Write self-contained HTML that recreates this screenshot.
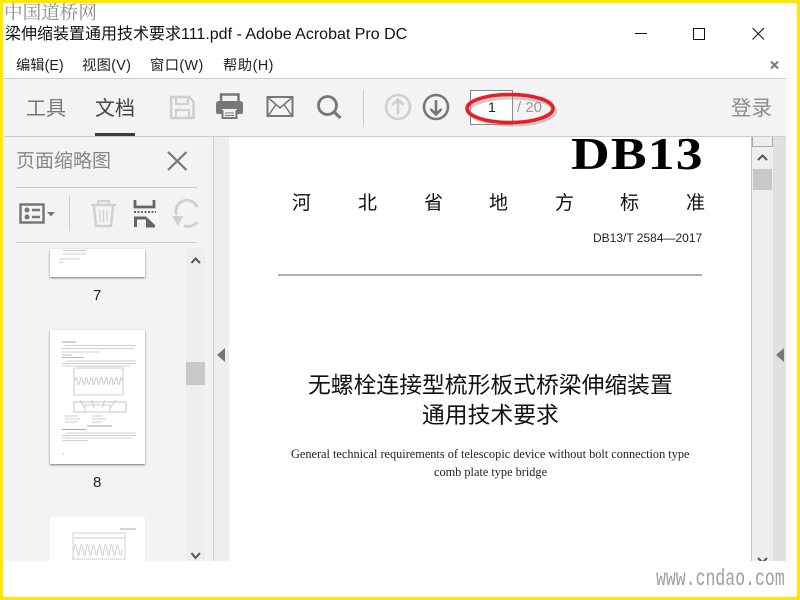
<!DOCTYPE html>
<html><head><meta charset="utf-8">
<style>
html,body{margin:0;padding:0;background:#fff}
body{width:800px;height:600px;position:relative;overflow:hidden;font-family:"Liberation Sans","Noto Sans CJK SC",sans-serif}
.a{position:absolute}
.t{position:absolute;white-space:nowrap;line-height:1}
svg{position:absolute;overflow:visible}
</style></head><body>

<!-- app regions -->
<div class="a" style="left:4px;top:78px;width:782px;height:59px;background:#f3f3f3;border-top:1px solid #ccc;border-bottom:1px solid #ccc;box-sizing:border-box"></div>
<div class="a" style="left:4px;top:137px;width:209px;height:424px;background:#f3f3f3"></div>
<div class="a" style="left:213px;top:137px;width:1px;height:424px;background:#ccc"></div>
<div class="a" style="left:214px;top:137px;width:15px;height:424px;background:#eeeeee"></div>
<div class="a" style="left:229px;top:137px;width:522px;height:424px;background:#fff"></div>
<div class="a" style="left:751px;top:137px;width:1px;height:424px;background:#c4c4c4"></div>
<div class="a" style="left:752px;top:137px;width:21px;height:424px;background:#eeeeee"></div>
<div class="a" style="left:773px;top:137px;width:13px;height:424px;background:#e0e0e0"></div>

<!-- watermark -->
<div class="t" style="left:4px;top:3px;font:18.600px/1 'Noto Serif CJK SC','Liberation Serif',serif;color:#8c8c8c">中国道桥网</div>
<div class="t" style="left:656px;top:569px;font:20px/1 'Liberation Mono',monospace;color:#a0a0a0;transform-origin:left top;transform:scale(.825,1.150)">www.cndao.com</div>

<!-- title -->
<div class="t" style="left:5px;top:27px;font-size:16px;color:#111">梁伸缩装置通用技术要求111.pdf - Adobe Acrobat Pro DC</div>
<svg style="left:0;top:0" width="800" height="100">
<path d="M635 33.500H647" stroke="#111" stroke-width="1"/>
<rect x="693.500" y="28.500" width="11" height="11" fill="none" stroke="#111"/>
<path d="M752.500 28L764 39.500M764 28L752.500 39.500" stroke="#111" stroke-width="1"/>
<path d="M771 61.500L778 68.500M778 61.500L771 68.500" stroke="#777" stroke-width="2"/>
</svg>

<!-- menu -->
<div class="t" style="left:16px;top:59px;font-size:14.300px;color:#222">编辑(E)</div>
<div class="t" style="left:82px;top:59px;font-size:14.300px;letter-spacing:.3px;color:#222">视图(V)</div>
<div class="t" style="left:150px;top:59px;font-size:14.300px;letter-spacing:.4px;color:#222">窗口(W)</div>
<div class="t" style="left:223px;top:59px;font-size:14.300px;letter-spacing:.5px;color:#222">帮助(H)</div>

<!-- toolbar -->
<div class="t" style="left:26px;top:99px;font-size:20px;color:#777">工具</div>
<div class="t" style="left:95px;top:99px;font-size:20px;color:#444">文档</div>
<div class="a" style="left:95px;top:133px;width:40px;height:3px;background:#3c3c3c"></div>
<div class="t" style="left:731px;top:99px;font-size:20.500px;color:#8a8a8a">登录</div>

<svg style="left:0;top:0" width="800" height="140" fill="none">
<!-- save -->
<path d="M171 97H189L193.500 101.500V118H171Z" stroke="#cfcfcf" stroke-width="2.500"/>
<path d="M176 97V104H188V97M176 118V110H189V118" stroke="#cfcfcf" stroke-width="2"/>
<!-- print -->
<path d="M221 102V94.500H238.500V102" stroke="#777" stroke-width="2.500"/>
<path d="M216 104Q216 101 219 101H240Q243 101 243 104V112Q243 114 241 114H237V109H222V114H218Q216 114 216 112Z" fill="#777"/>
<path d="M222.500 110V118H236.500V110" stroke="#777" stroke-width="2"/>
<path d="M225 113H234M225 115.500H234" stroke="#777"/>
<!-- mail -->
<rect x="267.500" y="97" width="25" height="19" stroke="#777" stroke-width="2"/>
<path d="M268 97.500L280 108L292 97.500M268 116L276 104.500M292 116L284 104.500" stroke="#777" stroke-width="1.500"/>
<!-- search -->
<circle cx="327.500" cy="105.500" r="9" stroke="#777" stroke-width="2.800"/>
<path d="M334 112L340.500 118" stroke="#777" stroke-width="3.200"/>
<path d="M363.500 90V125" stroke="#ccc"/>
<!-- up -->
<circle cx="398" cy="107" r="12" stroke="#cfcfcf" stroke-width="2.600"/>
<path d="M398 114V100M392.500 105L398 99.500L403.500 105" stroke="#cfcfcf" stroke-width="2.600"/>
<!-- down -->
<circle cx="436" cy="107" r="12" stroke="#777" stroke-width="2.600"/>
<path d="M436 100V114M430.500 109L436 114.500L441.500 109" stroke="#777" stroke-width="2.600"/>
</svg>

<!-- page box -->
<div class="a" style="left:470px;top:90px;width:43px;height:35px;background:#fff;border:1px solid #888;box-sizing:border-box"></div>
<div class="t" style="left:488px;top:100px;font-size:14px;color:#222">1</div>
<div class="t" style="left:517px;top:100px;font-size:15px;color:#999">/ 20</div>
<svg style="left:0;top:0" width="800" height="140" fill="none">
<ellipse cx="512" cy="111" rx="43" ry="13.500" stroke="#999" stroke-width="4" opacity=".5"/>
<ellipse cx="510" cy="108.500" rx="43" ry="14" stroke="#ec1c24" stroke-width="3.500"/>
</svg>

<!-- left panel -->
<div class="t" style="left:16px;top:152px;font-size:19px;color:#888">页面缩略图</div>
<div class="a" style="left:16px;top:187px;width:181px;height:1px;background:#ccc"></div>
<div class="a" style="left:16px;top:242px;width:181px;height:1px;background:#ccc"></div>
<svg style="left:0;top:0" width="230" height="250" fill="none">
<path d="M168 152L186.500 170M186.500 152L168 170" stroke="#777" stroke-width="2.200"/>
<rect x="20.500" y="204.500" width="23" height="18" stroke="#777" stroke-width="2.500"/>
<circle cx="27" cy="210" r="2.500" fill="#777"/><circle cx="27" cy="217" r="2.500" fill="#777"/>
<path d="M32 210H40M32 217H40" stroke="#777" stroke-width="2.500"/>
<path d="M47 212H55L51 216.500Z" fill="#777"/>
<path d="M69.500 196V231" stroke="#ccc"/>
<path d="M91 205H116M98 205V201H109V205" stroke="#d0d0d0" stroke-width="2.200"/>
<path d="M94 206L96 226H111L113 206" stroke="#d0d0d0" stroke-width="2.500"/>
<path d="M100 210V222M103.500 210V222M107 210V222" stroke="#d0d0d0" stroke-width="1.200"/>
<path d="M135 200V207H154V200" stroke="#666" stroke-width="2.800"/>
<path d="M134 212H156" stroke="#666" stroke-width="2" stroke-dasharray="2 1.500"/>
<path d="M135.500 227V218H146" stroke="#666" stroke-width="3"/>
<path d="M146 216.500L155 225V227.500H146Z" fill="#666"/>
<path d="M197 207A10.500 10.500 0 0 0 176.800 215" stroke="#d0d0d0" stroke-width="2.800"/>
<path d="M197 222A10.500 10.500 0 0 1 184 225.500" stroke="#d0d0d0" stroke-width="2.800"/>
<path d="M172 216H183L178 226Z" fill="#d0d0d0"/>
</svg>
<!-- keep undo icon clipped -->
<div class="a" style="left:198px;top:198px;width:10px;height:32px;background:#f3f3f3"></div>

<!-- thumbnail scrollbar -->
<div class="a" style="left:186px;top:249px;width:19px;height:312px;background:#eeeeee"></div>
<div class="a" style="left:186px;top:362px;width:19px;height:23px;background:#c8c8c8"></div>

<!-- thumb 7 -->
<div class="a" style="left:50px;top:249px;width:95px;height:28px;background:#fff;box-shadow:0 1px 2px #777"></div>
<svg style="left:50px;top:249px" width="95" height="28">
<path d="M13 1.500H36M13 5H36M9 10H30M9 13.500H13" stroke="#ccc"/>
</svg>
<div class="t" style="left:93px;top:288px;font-size:15px;color:#222">7</div>

<!-- thumb 8 -->
<div class="a" style="left:50px;top:330px;width:95px;height:134px;background:#fff;box-shadow:0 1px 2px #777"></div>
<svg style="left:50px;top:330px" width="95" height="134" fill="none" stroke="#d4d4d4">
<path d="M12 12H26" stroke="#aaa"/>
<path d="M15 15.500H86M12 18.500H84M12 22H50" stroke="#d0d0d0"/>
<path d="M12 25H22M12 27.500H34" stroke="#bbb"/>
<path d="M15 31H86M12 33.500H86M12 36H80" stroke="#d0d0d0"/>
<path d="M24 38H73V65H24Z" stroke="#ccc"/>
<path d="M25 51q1.250-7 2.500 0t2.500 0t2.500 0t2.500 0t2.500 0t2.500 0t2.500 0t2.500 0t2.500 0t2.500 0t2.500 0t2.500 0t2.500 0t2.500 0t2.500 0t2.500 0t2.500 0t2.500 0t2.500 0" stroke="#c8c8c8"/>
<path d="M24 72H76V82H24Z" stroke="#c4c4c4"/>
<path d="M30 70L35 78M42 70L44 78M55 70L52 78M66 70L60 78M35 75H60V82H35Z" stroke="#ccc"/>
<path d="M15 86H28M15 89H30M15 92H27M42 86H52M42 89H56M42 92H52" stroke="#ccc"/>
<path d="M37 96H62M12 99.500H36" stroke="#aaa"/>
<path d="M15 103H86M12 105.500H86M12 108H82M12 110.500H38" stroke="#d0d0d0"/>
<path d="M13 124H14" stroke="#aaa"/>
</svg>
<div class="t" style="left:93px;top:475px;font-size:15px;color:#222">8</div>

<!-- thumb 9 -->
<div class="a" style="left:50px;top:517px;width:95px;height:44px;background:#fff"></div>
<svg style="left:50px;top:517px" width="95" height="44" fill="none" stroke="#d0d0d0">
<path d="M70 12H86" stroke="#aaa"/>
<path d="M23 16V43M75 16V43M23 16H75M23 21H75M23 42H75"/>
<path d="M24 33q1.500-11 3 0t3 0t3 0t3 0t3 0t3 0t3 0t3 0t3 0t3 0t3 0t3 0t3 0t3 0t3 0t3 0" stroke="#ccc"/>
</svg>

<!-- scroll arrows + collapse handles -->
<svg style="left:0;top:0" width="800" height="600" fill="none">
<path d="M191.500 263L195.500 258.500L200 263" stroke="#555" stroke-width="2"/>
<path d="M191.500 553L195.500 558L200 553" stroke="#555" stroke-width="2"/>
<path d="M225 348V362L217 355Z" fill="#777" stroke="none"/>
<path d="M784 348V362L776 355Z" fill="#777" stroke="none"/>
<path d="M758 160L762.500 155.500L767 160" stroke="#555" stroke-width="2"/>
<path d="M758 558L762.500 562.500L767 558" stroke="#555" stroke-width="2"/>
</svg>
<div class="a" style="left:752px;top:137px;width:21px;height:10px;background:#eee;border:1px solid #aaa;border-top:0;box-sizing:border-box"></div>
<div class="a" style="left:753px;top:169px;width:19px;height:21px;background:#c8c8c8"></div>

<!-- bottom mask for arrow -->
<div class="a" style="left:752px;top:561px;width:34px;height:6px;background:#fff"></div>

<!-- document -->
<div class="a" style="left:229px;top:137px;width:522px;height:40px;overflow:hidden">
<div class="t" style="left:342px;top:-6.500px;font:bold 46px/1 'Liberation Serif',serif;letter-spacing:1px;color:#000;transform-origin:left top;transform:scaleX(1.165)">DB13</div>
</div>
<div class="t" style="left:292px;top:194px;font-size:19px;color:#111">河</div>
<div class="t" style="left:358px;top:194px;font-size:19px;color:#111">北</div>
<div class="t" style="left:424px;top:194px;font-size:19px;color:#111">省</div>
<div class="t" style="left:489px;top:194px;font-size:19px;color:#111">地</div>
<div class="t" style="left:555px;top:194px;font-size:19px;color:#111">方</div>
<div class="t" style="left:620px;top:194px;font-size:19px;color:#111">标</div>
<div class="t" style="left:686px;top:194px;font-size:19px;color:#111">准</div>
<div class="t" style="left:593px;top:232px;font-size:12px;color:#222">DB13/T 2584—2017</div>
<div class="a" style="left:278px;top:274px;width:424px;height:2px;background:#b0b0b0"></div>
<div class="t" style="left:308px;top:374px;font-size:22.800px;color:#111">无螺栓连接型梳形板式桥梁伸缩装置</div>
<div class="t" style="left:422px;top:404px;font-size:22.800px;color:#111">通用技术要求</div>
<div class="t" style="left:291px;top:448px;font:12.300px/1 'Liberation Serif',serif;color:#222">General technical requirements of telescopic device without bolt connection type</div>
<div class="t" style="left:434px;top:466px;font:12.300px/1 'Liberation Serif',serif;color:#222">comb plate type bridge</div>

<!-- yellow frame -->
<div class="a" style="left:0;top:0;width:800px;height:600px;box-sizing:border-box;border:3px solid #ffe800;pointer-events:none"></div>
</body></html>
